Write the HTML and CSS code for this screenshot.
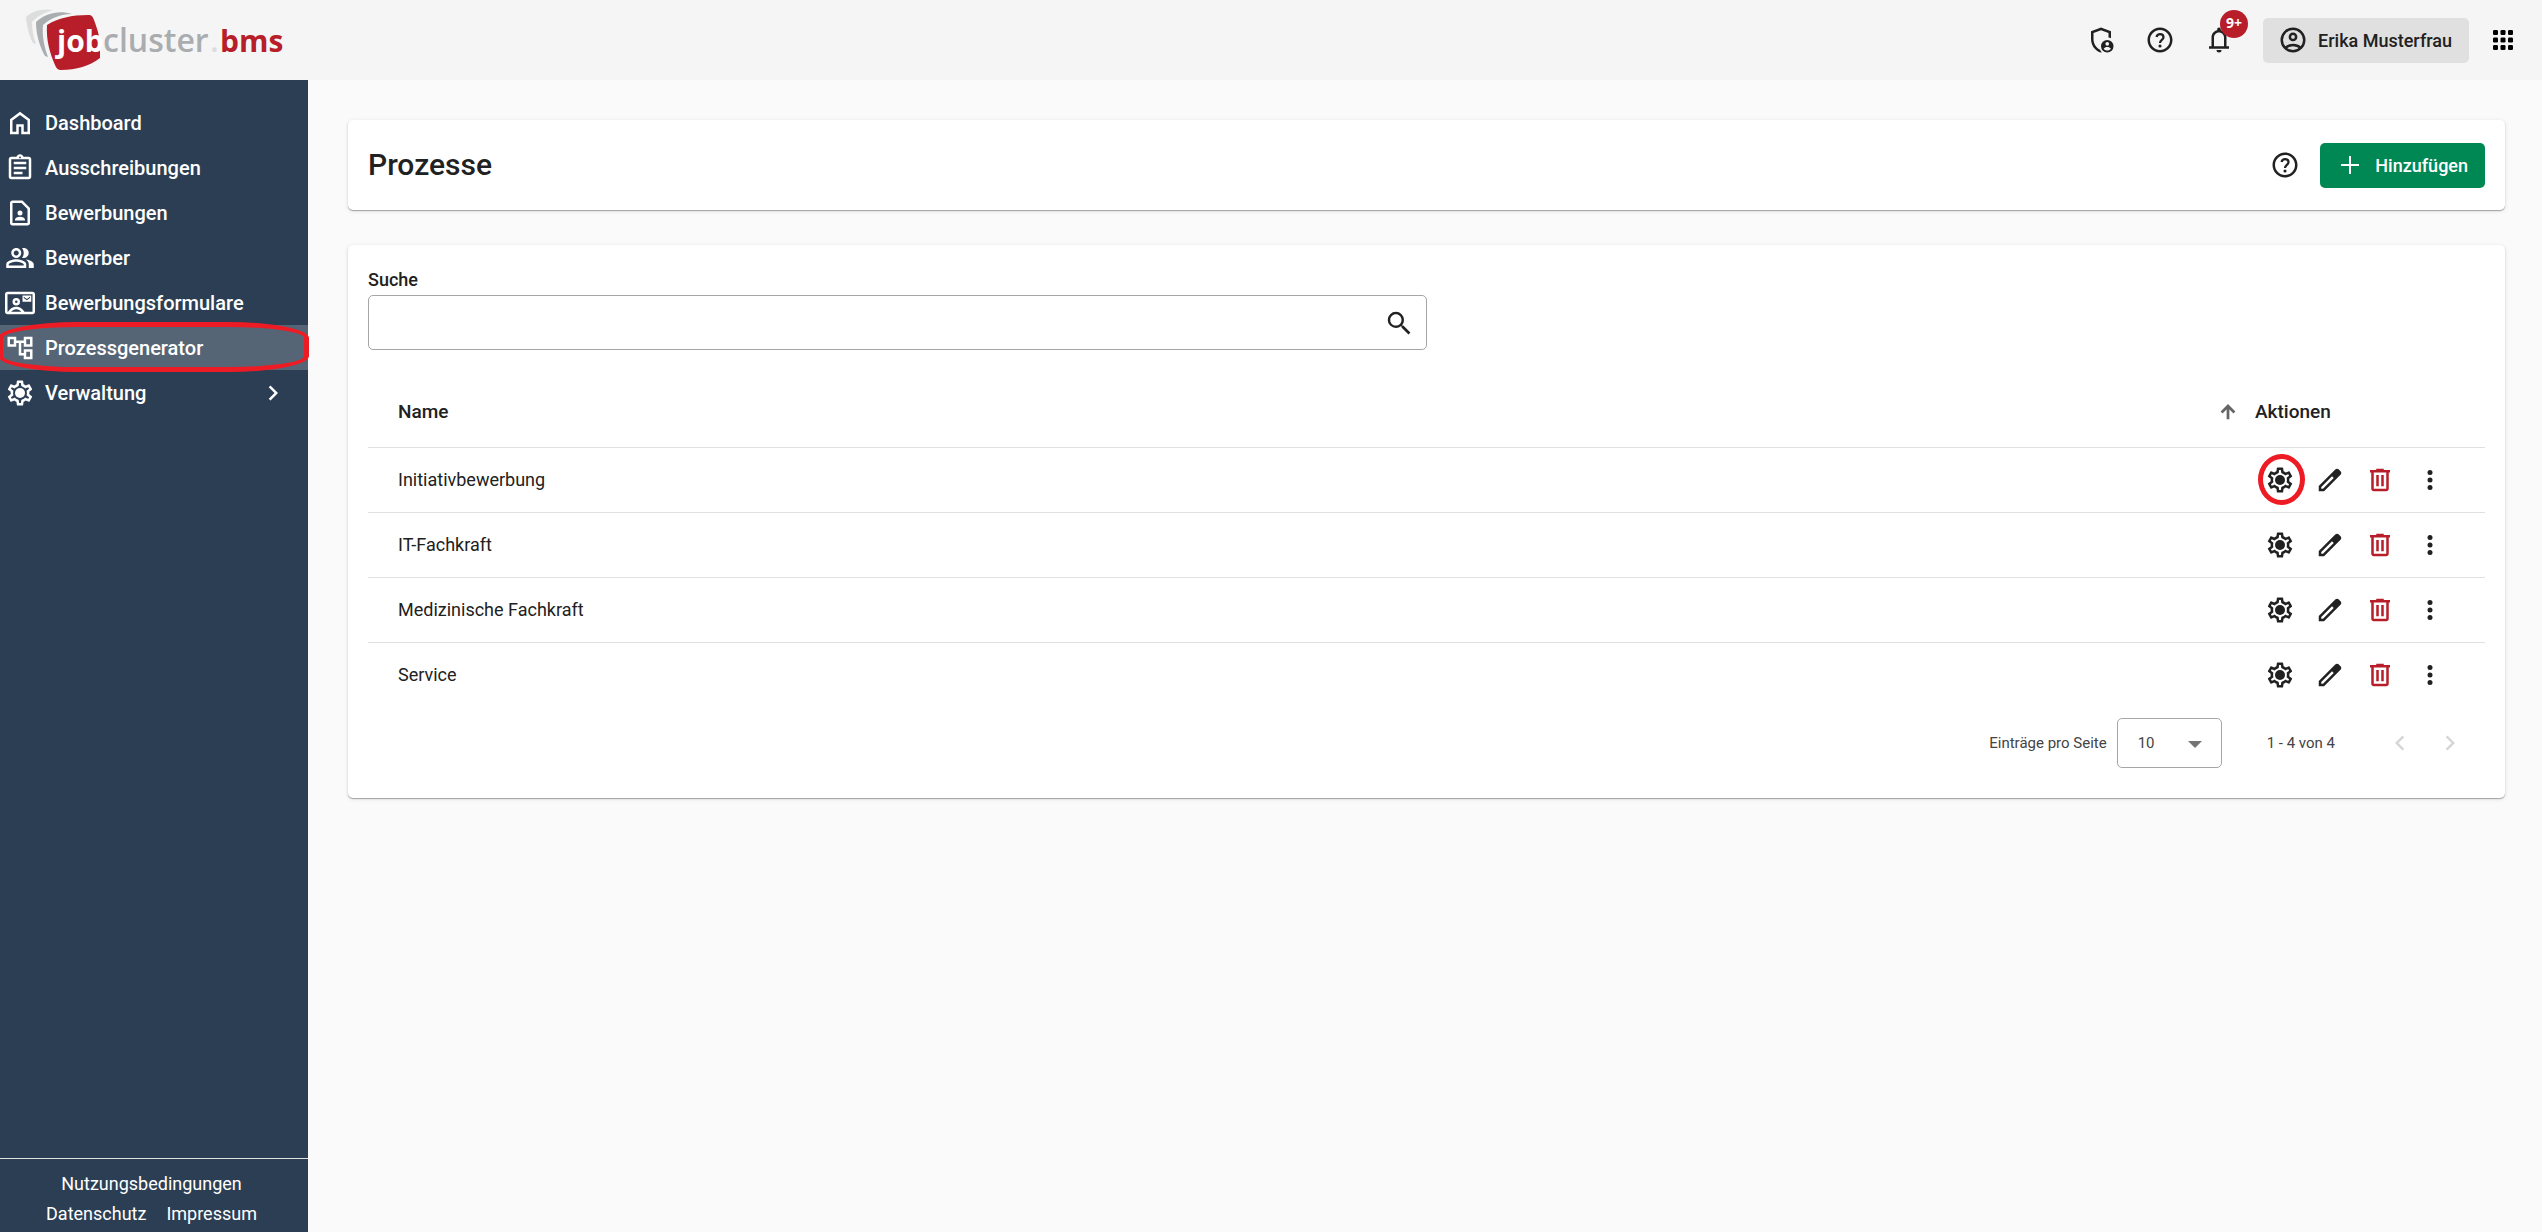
FILE: index.html
```html
<!DOCTYPE html>
<html lang="de">
<head>
  <meta charset="UTF-8">
  <meta name="viewport" content="width=device-width, initial-scale=1.0">
  <title>Prozesse - jobcluster.bms</title>
  <link rel="stylesheet" href="styles.css">
</head>
<body>
  <svg class="sprite" aria-hidden="true">
    <symbol id="home" viewBox="0 0 24 24"><path d="M6 19h3v-6h6v6h3v-9l-6-4.5L6 10v9zm-2 2V9l8-6 8 6v12h-7v-6h-2v6H4z"/></symbol>
    <symbol id="assignment" viewBox="0 0 24 24"><path d="M7 15h7v2H7zm0-4h10v2H7zm0-4h10v2H7zM19 3h-4.18C14.4 1.84 13.3 1 12 1s-2.4.84-2.82 2H5c-1.1 0-2 .9-2 2v14c0 1.1.9 2 2 2h14c1.1 0 2-.9 2-2V5c0-1.1-.9-2-2-2zm-7-.25a.75.75 0 1 1 0 1.5.75.75 0 0 1 0-1.5zM19 19H5V5h14v14z"/></symbol>
    <symbol id="contact-page" viewBox="0 0 24 24"><path fill-rule="evenodd" d="M6 22c-1.1 0-2-.9-2-2V4c0-1.1.9-2 2-2h8l6 6v12c0 1.1-.9 2-2 2H6zm0-2h12V8.8L13.2 4H6v16z"/><path d="M12 14a2 2 0 1 0 0-4 2 2 0 0 0 0 4zM8 18v-.6C8 16 10 15 12 15s4 1 4 2.4V18H8z"/></symbol>
    <symbol id="group" viewBox="0 0 24 24"><path d="M16.67 13.13C18.04 14.06 19 15.32 19 17v3h4v-3c0-2.18-3.57-3.47-6.33-3.87zM15 12c2.21 0 4-1.79 4-4s-1.79-4-4-4c-.47 0-.91.1-1.33.24C14.5 5.27 15 6.58 15 8s-.5 2.73-1.33 3.76c.42.14.86.24 1.33.24zM9 12c2.21 0 4-1.79 4-4s-1.79-4-4-4-4 1.79-4 4 1.79 4 4 4zm0-6c1.1 0 2 .9 2 2s-.9 2-2 2-2-.9-2-2 .9-2 2-2zM9 13c-2.67 0-8 1.34-8 4v3h16v-3c0-2.66-5.33-4-8-4zm6 5H3v-.99C3.2 16.29 6.3 15 9 15s5.8 1.29 6 2v1z"/></symbol>
    <symbol id="contact-mail" viewBox="0 0 24 24"><path fill-rule="evenodd" d="M2 3h20c1.1 0 2 .9 2 2v14c0 1.1-.9 2-2 2H2c-1.1 0-2-.9-2-2V5c0-1.1.9-2 2-2zm0 2v14h.4c1.5-2.5 4-4 6.6-4s5.1 1.5 6.6 4H22V5H2zm2.9 14h8.2c-1.1-1.3-2.5-2-4.1-2s-3 .7-4.1 2zM9 14a3 3 0 1 1 0-6 3 3 0 0 1 0 6zm0-2a1 1 0 1 0 0-2 1 1 0 0 0 0 2zM14 6h7v5h-7V6zm1 1v1l2.5 1.7L20 8V7l-2.5 1.7L15 7z"/></symbol>
    <symbol id="account-tree" viewBox="0 0 24 24"><path d="M22 11V3h-7v3H9V3H2v8h7V8h2v10h4v3h7v-8h-7v3h-2V8h2v3h7zM7 9H4V5h3v4zm10 6h3v4h-3v-4zm0-10h3v4h-3V5z"/></symbol>
    <symbol id="settings" viewBox="0 0 24 24"><path d="M19.43 12.98c.04-.32.07-.64.07-.98 0-.34-.03-.66-.07-.98l2.11-1.65c.19-.15.24-.42.12-.64l-2-3.46c-.09-.16-.26-.25-.44-.25-.06 0-.12.01-.17.03l-2.49 1c-.52-.4-1.08-.73-1.69-.98l-.38-2.65C14.46 2.18 14.25 2 14 2h-4c-.25 0-.46.18-.49.42l-.38 2.65c-.61.25-1.17.59-1.69.98l-2.49-1c-.06-.02-.12-.03-.18-.03-.17 0-.34.09-.43.25l-2 3.46c-.13.22-.07.49.12.64l2.11 1.65c-.04.32-.07.65-.07.98 0 .33.03.66.07.98l-2.11 1.65c-.19.15-.24.42-.12.64l2 3.46c.09.16.26.25.44.25.06 0 .12-.01.17-.03l2.49-1c.52.4 1.08.73 1.69.98l.38 2.65c.03.24.24.42.49.42h4c.25 0 .46-.18.49-.42l.38-2.65c.61-.25 1.17-.59 1.69-.98l2.49 1c.06.02.12.03.18.03.17 0 .34-.09.43-.25l2-3.46c.12-.22.07-.49-.12-.64l-2.11-1.65zm-1.98-1.71c.04.31.05.52.05.73 0 .21-.02.43-.05.73l-.14 1.13.89.7 1.08.84-.7 1.21-1.27-.51-1.04-.42-.9.68c-.43.32-.84.56-1.25.73l-1.06.43-.16 1.13-.2 1.35h-1.4l-.19-1.35-.16-1.13-1.06-.43c-.43-.18-.83-.41-1.23-.71l-.91-.7-1.06.43-1.27.51-.7-1.21 1.08-.84.89-.7-.14-1.13c-.03-.31-.05-.54-.05-.74s.02-.43.05-.73l.14-1.13-.89-.7-1.08-.84.7-1.21 1.27.51 1.04.42.9-.68c.43-.32.84-.56 1.25-.73l1.06-.43.16-1.13.2-1.35h1.39l.19 1.35.16 1.13 1.06.43c.43.18.83.41 1.23.71l.91.7 1.06-.43 1.27-.51.7 1.21-1.07.85-.89.7.14 1.13z"/><circle cx="12" cy="12" r="4"/></symbol>
    <symbol id="chevron-right" viewBox="0 0 24 24"><path d="M10 6L8.6 7.4l4.6 4.6-4.6 4.6L10 18l6-6z"/></symbol>
    <symbol id="chevron-left" viewBox="0 0 24 24"><path d="M14 6l1.4 1.4-4.6 4.6 4.6 4.6L14 18l-6-6z"/></symbol>
    <symbol id="shield-person" viewBox="0 0 24 24"><path d="M12 2l8 3v5.5c-.6-.3-1.3-.5-2-.5V6.4l-6-2.25L6 6.4v4.7c0 3.8 2.2 7.2 5.3 8.6.3.8.8 1.5 1.4 2.1l-.7.2c-4.6-1.15-8-5.85-8-10.9V5l8-3z"/><path fill-rule="evenodd" d="M17 12a5 5 0 1 1 0 10 5 5 0 0 1 0-10zm0 1.5a1.5 1.5 0 1 0 0 3 1.5 1.5 0 0 0 0-3zm0 4c-1.2 0-2.3.5-2.9 1.4.7.9 1.7 1.5 2.9 1.5s2.2-.6 2.9-1.5c-.6-.9-1.7-1.4-2.9-1.4z"/></symbol>
    <symbol id="help" viewBox="0 0 24 24"><path d="M12 2C6.48 2 2 6.48 2 12s4.48 10 10 10 10-4.48 10-10S17.52 2 12 2zm0 18c-4.41 0-8-3.59-8-8s3.59-8 8-8 8 3.59 8 8-3.59 8-8 8z"/><circle cx="12" cy="16.8" r="1.25"/><path d="M9.2 9.6C9.6 8.2 10.6 7.3 12 7.3c1.6 0 2.8 1 2.8 2.5 0 2-2.8 2.2-2.8 4.5" fill="none" stroke="currentColor" stroke-width="1.8"/></symbol>
    <symbol id="bell" viewBox="0 0 24 24"><path fill-rule="evenodd" d="M4 19v-2h2v-7c0-3 1.8-5.2 4.5-5.8v-.7a1.5 1.5 0 0 1 3 0v.7C16.2 4.8 18 7 18 10v7h2v2H4zm4-2h8v-7c0-2.2-1.8-4-4-4s-4 1.8-4 4v7z"/><path d="M12 22a2 2 0 0 1-2-2h4a2 2 0 0 1-2 2z"/></symbol>
    <symbol id="account" viewBox="0 0 24 24"><g fill="none" stroke="currentColor" stroke-width="2"><circle cx="12" cy="12" r="9"/><circle cx="12" cy="9.5" r="2.5"/><path d="M5.8 18.3c1.7-1.5 3.9-2.3 6.2-2.3s4.5.8 6.2 2.3"/></g></symbol>
    <symbol id="apps" viewBox="0 0 24 24"><rect x="4" y="4" width="4" height="4" rx="1"/><rect x="10" y="4" width="4" height="4" rx="1"/><rect x="16" y="4" width="4" height="4" rx="1"/><rect x="4" y="10" width="4" height="4" rx="1"/><rect x="10" y="10" width="4" height="4" rx="1"/><rect x="16" y="10" width="4" height="4" rx="1"/><rect x="4" y="16" width="4" height="4" rx="1"/><rect x="10" y="16" width="4" height="4" rx="1"/><rect x="16" y="16" width="4" height="4" rx="1"/></symbol>
    <symbol id="add" viewBox="0 0 24 24"><path d="M11 3h2v8h8v2h-8v8h-2v-8H3v-2h8z"/></symbol>
    <symbol id="search" viewBox="0 0 24 24"><path d="M15.5 14h-.79l-.28-.27A6.471 6.471 0 0 0 16 9.5 6.5 6.5 0 1 0 9.5 16c1.61 0 3.09-.59 4.23-1.57l.27.28v.79l5.6 5.6 1.5-1.5-5.6-5.6zm-6 0C7.01 14 5 11.99 5 9.5S7.01 5 9.5 5 14 7.01 14 9.5 11.99 14 9.5 14z"/></symbol>
    <symbol id="arrow-up" viewBox="0 0 24 24"><path d="M12 20V6M5 12.5l7-7 7 7" fill="none" stroke="currentColor" stroke-width="3"/></symbol>
    <symbol id="edit" viewBox="0 0 24 24"><path fill-rule="evenodd" d="M5 19h1.4l8.6-8.6L13.6 9 5 17.6V19zm-2 2v-4.25L16.2 3.6c.4-.4.9-.6 1.44-.6.53 0 1.02.2 1.42.6L20.4 5c.4.4.6.9.6 1.42 0 .54-.2 1.04-.6 1.44L7.25 21H3z"/></symbol>
    <symbol id="delete" viewBox="0 0 24 24"><path fill-rule="evenodd" d="M5 6H4V4h5V3h6v1h5v2h-1v13c0 1.1-.9 2-2 2H7c-1.1 0-2-.9-2-2V6zm12 0H7v13h10V6zM9 17h2V8H9v9zm4 0h2V8h-2v9z"/></symbol>
    <symbol id="more" viewBox="0 0 24 24"><circle cx="12" cy="6" r="2"/><circle cx="12" cy="12" r="2"/><circle cx="12" cy="18" r="2"/></symbol>
  </svg>

  <header class="topbar">
    <a class="logo" href="#" aria-label="jobcluster.bms">
      <svg width="290" height="80" viewBox="0 0 290 80">
        <path fill="#dcdddd" d="M53 10C42 8 32 11 26 17c1 10 3 19 7 26l3 1c-3-8-4-15-4-22 5-6 12-9 21-12z"/>
        <path fill="#a9adb0" d="M72 14c-13-4-26-1-36 8 0 13 4 25 9 34l3 1c-4-11-6-21-5-32 8-7 17-11 29-11z"/>
        <path fill="#b71e2a" d="M47 25c11-7 25-10 41-10 4 0 5 2 6 5 3 8 6 17 6 25v13c-10 8-24 12-39 12-3 0-5-2-6-5-5-12-9-24-8-40z"/>
        <text class="logo-job" x="57" y="52">job</text>
        <text class="logo-cluster" x="103" y="52">cluster</text>
        <text class="logo-dot" x="210" y="52">.</text>
        <text class="logo-bms" x="220" y="52">bms</text>
      </svg>
    </a>
    <div class="topbar-actions">
      <button class="icon-button" aria-label="Datenschutz"><svg class="icon"><use href="#shield-person"/></svg></button>
      <button class="icon-button" aria-label="Hilfe"><svg class="icon"><use href="#help"/></svg></button>
      <button class="icon-button" aria-label="Benachrichtigungen"><svg class="icon"><use href="#bell"/></svg><span class="badge">9+</span></button>
      <button class="user-button"><svg class="icon"><use href="#account"/></svg>Erika Musterfrau</button>
      <button class="icon-button apps" aria-label="Apps"><svg class="icon"><use href="#apps"/></svg></button>
    </div>
  </header>

  <div class="layout">
    <aside class="sidebar">
      <nav>
        <a href="#"><svg class="icon"><use href="#home"/></svg>Dashboard</a>
        <a href="#"><svg class="icon"><use href="#assignment"/></svg>Ausschreibungen</a>
        <a href="#"><svg class="icon"><use href="#contact-page"/></svg>Bewerbungen</a>
        <a href="#"><svg class="icon"><use href="#group"/></svg>Bewerber</a>
        <a href="#"><svg class="icon"><use href="#contact-mail"/></svg>Bewerbungsformulare</a>
        <a href="#" class="active"><svg class="icon"><use href="#account-tree"/></svg>Prozessgenerator</a>
        <a href="#"><svg class="icon"><use href="#settings"/></svg>Verwaltung<svg class="icon expand"><use href="#chevron-right"/></svg></a>
      </nav>
      <footer>
        <a href="#">Nutzungsbedingungen</a>
        <a href="#">Datenschutz</a>
        <a href="#">Impressum</a>
      </footer>
    </aside>

    <main>
      <section class="card title-card">
        <h1>Prozesse</h1>
        <button class="icon-button" aria-label="Hilfe"><svg class="icon"><use href="#help"/></svg></button>
        <button class="add-button"><svg class="icon"><use href="#add"/></svg>Hinzufügen</button>
      </section>

      <section class="card list-card">
        <label class="search-label" for="search">Suche</label>
        <div class="search-field">
          <input id="search" type="text">
          <button class="icon-button" aria-label="Suchen"><svg class="icon"><use href="#search"/></svg></button>
        </div>

        <table>
          <thead>
            <tr>
              <th><div class="sort-header">Name<svg class="sort-icon"><use href="#arrow-up"/></svg></div></th>
              <th class="actions-col">Aktionen</th>
            </tr>
          </thead>
          <tbody>
            <tr>
              <td>Initiativbewerbung</td>
              <td class="actions-col"><div class="actions">
                <button class="icon-button marked" aria-label="Konfigurieren"><svg class="icon"><use href="#settings"/></svg></button>
                <button class="icon-button" aria-label="Bearbeiten"><svg class="icon"><use href="#edit"/></svg></button>
                <button class="icon-button delete" aria-label="Löschen"><svg class="icon"><use href="#delete"/></svg></button>
                <button class="icon-button" aria-label="Mehr"><svg class="icon"><use href="#more"/></svg></button>
              </div></td>
            </tr>
            <tr>
              <td>IT-Fachkraft</td>
              <td class="actions-col"><div class="actions">
                <button class="icon-button" aria-label="Konfigurieren"><svg class="icon"><use href="#settings"/></svg></button>
                <button class="icon-button" aria-label="Bearbeiten"><svg class="icon"><use href="#edit"/></svg></button>
                <button class="icon-button delete" aria-label="Löschen"><svg class="icon"><use href="#delete"/></svg></button>
                <button class="icon-button" aria-label="Mehr"><svg class="icon"><use href="#more"/></svg></button>
              </div></td>
            </tr>
            <tr>
              <td>Medizinische Fachkraft</td>
              <td class="actions-col"><div class="actions">
                <button class="icon-button" aria-label="Konfigurieren"><svg class="icon"><use href="#settings"/></svg></button>
                <button class="icon-button" aria-label="Bearbeiten"><svg class="icon"><use href="#edit"/></svg></button>
                <button class="icon-button delete" aria-label="Löschen"><svg class="icon"><use href="#delete"/></svg></button>
                <button class="icon-button" aria-label="Mehr"><svg class="icon"><use href="#more"/></svg></button>
              </div></td>
            </tr>
            <tr>
              <td>Service</td>
              <td class="actions-col"><div class="actions">
                <button class="icon-button" aria-label="Konfigurieren"><svg class="icon"><use href="#settings"/></svg></button>
                <button class="icon-button" aria-label="Bearbeiten"><svg class="icon"><use href="#edit"/></svg></button>
                <button class="icon-button delete" aria-label="Löschen"><svg class="icon"><use href="#delete"/></svg></button>
                <button class="icon-button" aria-label="Mehr"><svg class="icon"><use href="#more"/></svg></button>
              </div></td>
            </tr>
          </tbody>
        </table>

        <div class="paginator">
          <label for="pageSize">Einträge pro Seite</label>
          <div class="select-wrap">
            <select id="pageSize">
              <option>10</option>
              <option>25</option>
              <option>50</option>
            </select>
          </div>
          <span class="range">1 - 4 von 4</span>
          <button class="icon-button" aria-label="Vorherige Seite" disabled><svg class="icon"><use href="#chevron-left"/></svg></button>
          <button class="icon-button" aria-label="Nächste Seite" disabled><svg class="icon"><use href="#chevron-right"/></svg></button>
        </div>
      </section>
    </main>
  </div>
</body>
</html>
```
FILE: styles.css
```css
:root {
  --bg: #fafafa;
  --topbar: #f5f5f5;
  --sidebar: #2c3e53;
  --sidebar-active: #566575;
  --text: #212121;
  --border: #a6a6a6;
  --line: #e0e0e0;
  --red: #b71e2a;
  --green: #008854;
  --mark: #ed1c24;
}
* { box-sizing: border-box; }
body {
  margin: 0;
  min-height: 100vh;
  display: flex;
  flex-direction: column;
  font-family: Roboto, "Liberation Sans", sans-serif;
  font-size: 18px;
  background: var(--bg);
  color: var(--text);
}
button, input, select {
  font: inherit;
  color: inherit;
}
button {
  border: none;
  background: none;
  padding: 0;
  cursor: pointer;
}
a {
  color: inherit;
  text-decoration: none;
}
.sprite {
  display: none;
}
.icon {
  display: block;
  flex: none;
  width: 30px;
  height: 30px;
  fill: currentColor;
}
.icon-button {
  position: relative;
  display: flex;
  align-items: center;
  justify-content: center;
  width: 50px;
  height: 50px;
}

/* top bar */
.topbar {
  display: flex;
  align-items: center;
  justify-content: space-between;
  height: 80px;
  padding-right: 14px;
  background: var(--topbar);
}
.logo svg {
  display: block;
}
.logo text {
  font-family: "Open Sans", "Noto Sans", sans-serif;
  font-size: 32px;
  font-weight: 600;
}
.logo .logo-job { fill: #fff; font-size: 30px; font-weight: 700; }
.logo .logo-cluster { fill: #a9adb0; }
.logo .logo-dot { fill: #dcdddd; }
.logo .logo-bms { fill: var(--red); font-size: 30px; font-weight: 700; }
.topbar-actions {
  display: flex;
  align-items: center;
  gap: 9px;
}
.badge {
  position: absolute;
  top: -5px;
  right: -4px;
  width: 28px;
  height: 28px;
  border-radius: 50%;
  background: var(--red);
  color: #fff;
  font-family: "Noto Sans", sans-serif;
  font-size: 14px;
  font-weight: 700;
  line-height: 26px;
  text-align: center;
}
.user-button {
  display: flex;
  align-items: center;
  gap: 10px;
  height: 45px;
  margin-left: 10px;
  padding: 0 17px 0 15px;
  border-radius: 5px;
  background: #e0e0e0;
  font-weight: 500;
}
.apps {
  color: #000;
}

/* sidebar */
.layout {
  flex: 1;
  display: flex;
}
.sidebar {
  flex: none;
  width: 308px;
  display: flex;
  flex-direction: column;
  justify-content: space-between;
  background: var(--sidebar);
  color: #fff;
}
.sidebar nav {
  padding-top: 20px;
}
.sidebar nav a {
  position: relative;
  display: flex;
  align-items: center;
  gap: 10px;
  height: 45px;
  padding: 0 20px 0 5px;
  font-size: 20px;
  font-weight: 500;
}
.sidebar nav .active {
  background: var(--sidebar-active);
}
.sidebar nav .active::after {
  content: "";
  position: absolute;
  inset: -3px -1px -2px -2px;
  border: 5px solid var(--mark);
  border-radius: 80px / 16px;
}
.sidebar .expand {
  margin-left: auto;
}
.sidebar footer {
  display: flex;
  flex-wrap: wrap;
  justify-content: center;
  column-gap: 20px;
  padding: 10px 40px 3px 35px;
  border-top: 1px solid #e0e0e0;
  line-height: 30px;
}

/* content */
main {
  flex: 1;
  padding: 40px 37px 40px 40px;
}
.card {
  padding: 20px;
  border-radius: 5px;
  background: #fff;
  box-shadow: 0 1px 1px rgba(0,0,0,0.3), 0 1px 4px rgba(0,0,0,0.12);
}
.title-card {
  display: flex;
  align-items: center;
  margin-bottom: 35px;
}
.title-card h1 {
  flex: 1;
  margin: 0;
  padding-bottom: 2px;
  font-size: 30px;
  font-weight: 500;
}
.add-button {
  display: flex;
  align-items: center;
  gap: 10px;
  height: 45px;
  margin-left: 10px;
  padding: 0 17px 0 15px;
  border-radius: 5px;
  background: var(--green);
  color: #fff;
  font-weight: 500;
}
.add-button .icon {
  padding: 3px;
}
.list-card {
  padding-bottom: 30px;
}
.search-label {
  display: block;
  line-height: 30px;
  font-weight: 500;
}
.search-field {
  display: flex;
  align-items: center;
  width: 50%;
  height: 55px;
  padding-right: 2px;
  border: 1px solid var(--border);
  border-radius: 5px;
}
.search-field input {
  flex: 1;
  min-width: 0;
  height: 100%;
  padding: 0 15px;
  border: none;
  outline: none;
  background: transparent;
}
table {
  width: 100%;
  margin-top: 27px;
  border-collapse: collapse;
}
th, td {
  height: 65px;
  padding: 0 15px 0 30px;
  text-align: left;
}
th {
  height: 70px;
  font-size: 19px;
  font-weight: 500;
}
tr {
  border-bottom: 1px solid var(--line);
}
tbody tr:last-child {
  border-bottom: none;
}
.sort-header {
  display: flex;
  align-items: center;
  justify-content: space-between;
}
.sort-icon {
  width: 24px;
  height: 24px;
  padding: 1px;
  color: #666;
}
th.actions-col, td.actions-col {
  width: 230px;
  padding: 0;
}
.actions {
  display: flex;
}
.delete {
  color: var(--red);
}
.marked::after {
  content: "";
  position: absolute;
  inset: -1px 0 0 3px;
  border: 5px solid var(--mark);
  border-radius: 50%;
}
.paginator {
  display: flex;
  align-items: center;
  justify-content: flex-end;
  margin-top: 11px;
  padding-right: 10px;
  font-size: 15px;
  color: #444;
}
.select-wrap {
  position: relative;
  margin: 0 45px 0 10px;
}
.select-wrap select {
  appearance: none;
  display: block;
  width: 105px;
  height: 50px;
  padding: 0 20px;
  border: 1px solid var(--border);
  border-radius: 5px;
  background: #fff;
}
.select-wrap::after {
  content: "";
  position: absolute;
  top: 23px;
  right: 20px;
  border: 7px solid transparent;
  border-top-color: #757575;
  border-bottom: none;
  pointer-events: none;
}
.range {
  margin-right: 40px;
}
.paginator .icon-button {
  color: #d6d6d6;
}
```
